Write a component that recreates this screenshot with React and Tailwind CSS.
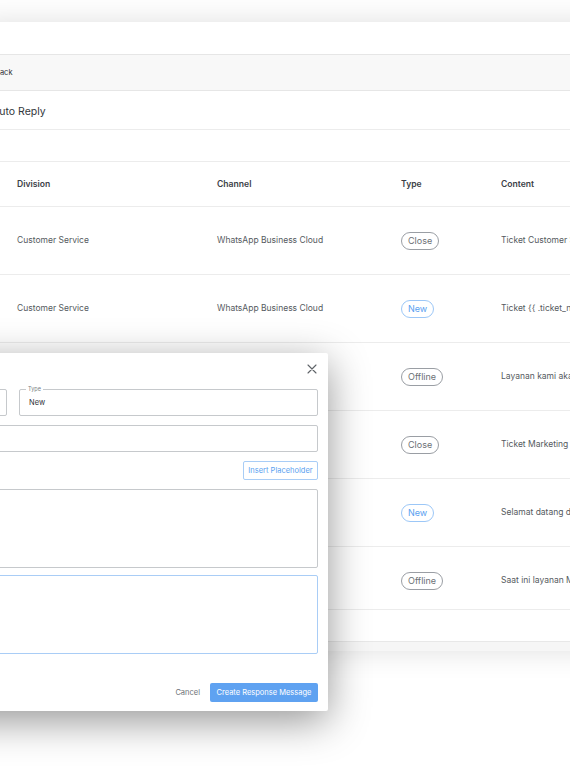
const ROWS = [
  { division: 'Customer Service', channel: 'WhatsApp Business Cloud', type: 'Close', content: 'Ticket Customer Service telah ditutup' },
  { division: 'Customer Service', channel: 'WhatsApp Business Cloud', type: 'New', content: 'Ticket {{ .ticket_number }} telah dibuat' },
  { division: 'Customer Service', channel: 'WhatsApp Business Cloud', type: 'Offline', content: 'Layanan kami akan segera kembali' },
  { division: 'Marketing', channel: 'WhatsApp Business Cloud', type: 'Close', content: 'Ticket Marketing telah ditutup' },
  { division: 'Marketing', channel: 'WhatsApp Business Cloud', type: 'New', content: 'Selamat datang di layanan kami' },
  { division: 'Marketing', channel: 'WhatsApp Business Cloud', type: 'Offline', content: 'Saat ini layanan Marketing sedang offline' },
]

function TypeBadge({ type }) {
  if (type === 'New') {
    return (
      <span className="inline-flex h-[18px] items-center rounded-full border border-[#9cc7f7] px-[6px] text-[9px] text-[#5a9ff0]">
        {type}
      </span>
    )
  }
  return (
    <span className="inline-flex h-[18px] items-center rounded-full border border-[#9a9ea4] px-[6px] text-[9px] text-[#6b7075]">
      {type}
    </span>
  )
}

function CloseIcon() {
  return (
    <svg width="10" height="10" viewBox="0 0 10 10" fill="none" stroke="#5f6368" strokeWidth="1.1" strokeLinecap="round">
      <path d="M1 1 L9 9 M9 1 L1 9" />
    </svg>
  )
}

export default function App() {
  return (
    <div className="relative h-[770px] w-[570px] overflow-hidden bg-white font-['Inter','Noto_Sans',sans-serif]">
      {/* Background table panel, cropped on both sides */}
      <div className="ml-[-20px] mt-[22px] w-[640px] bg-white shadow-[0_0_28px_rgba(0,0,0,0.13)]">
        <div className="h-[32px]" />
        <div className="flex h-[37px] items-center border-y border-[#e6e6e6] bg-[#f8f8f8] pl-[15px] text-[7.5px] text-[#2d3136]">
          Back
        </div>
        <div className="flex h-[39px] items-center border-b border-[#ececec] pl-[12px] pt-[3px] text-[10.5px] text-[#33373c]">
          Auto Reply
        </div>
        <div className="h-[32px] border-b border-[#ececec]" />

        <div className="grid h-[45px] grid-cols-[200px_184px_100px_1fr] items-center border-b border-[#ececec] pl-[37px] text-[8.6px] font-semibold text-[#3b4046]">
          <div>Division</div>
          <div>Channel</div>
          <div>Type</div>
          <div>Content</div>
        </div>

        {ROWS.map((r, i) => (
          <div
            key={i}
            className={
              i === ROWS.length - 1
                ? 'grid h-[63px] grid-cols-[200px_184px_100px_1fr] items-center border-b border-[#ececec] pl-[37px] pt-[5px] text-[8.5px] text-[#555a60]'
                : 'grid h-[68px] grid-cols-[200px_184px_100px_1fr] items-center border-b border-[#ececec] pl-[37px] text-[8.5px] text-[#555a60]'
            }
          >
            <div className="whitespace-nowrap">{r.division}</div>
            <div className="whitespace-nowrap">{r.channel}</div>
            <div>
              <TypeBadge type={r.type} />
            </div>
            <div className="overflow-hidden whitespace-nowrap">{r.content}</div>
          </div>
        ))}

        <div className="h-[31px]" />
        <div className="h-[10px] border-t border-[#e8e8e8] bg-[#f6f6f6]" />
      </div>

      {/* Create response modal */}
      <div className="absolute left-[-320px] top-[353px] flex h-[358px] w-[648px] flex-col rounded-[2px] bg-white shadow-[0_10px_40px_rgba(0,0,0,0.42)]">
        <div className="flex h-[36px] items-start justify-end pr-[11px] pt-[11px]">
          <CloseIcon />
        </div>

        <div className="flex flex-col px-[10px]">
          <div className="grid grid-cols-[1fr_299px] gap-[12px]">
            <div className="h-[27px] rounded-[2px] border border-[#c6c9cc]" />
            <div className="relative flex h-[27px] items-center rounded-[2px] border border-[#c6c9cc] pl-[9px] text-[7.5px] text-[#2f3338]">
              <span className="absolute left-[6px] top-[-5px] bg-white px-[2px] text-[5.5px] text-[#7a7f85]">Type</span>
              New
            </div>
          </div>

          <div className="mt-[9px] h-[27px] rounded-[2px] border border-[#c6c9cc]" />

          <div className="mt-[9px] flex justify-end">
            <button className="flex h-[19px] w-[75px] items-center justify-center rounded-[2px] border border-[#a9cdf6] text-[7.5px] text-[#5a9ff0]">
              Insert Placeholder
            </button>
          </div>

          <div className="mt-[9px] h-[79px] rounded-[2px] border border-[#c6c9cc]" />
          <div className="mt-[7px] h-[79px] rounded-[2px] border border-[#a9cdf6]" />
        </div>

        <div className="mt-auto flex items-center justify-end gap-[10px] pb-[9px] pr-[10px]">
          <span className="text-[7.5px] text-[#6b7075]">Cancel</span>
          <button className="flex h-[19px] w-[108px] items-center justify-center rounded-[2px] bg-[#5fa2f1] text-[7.5px] text-white">
            Create Response Message
          </button>
        </div>
      </div>
    </div>
  )
}
